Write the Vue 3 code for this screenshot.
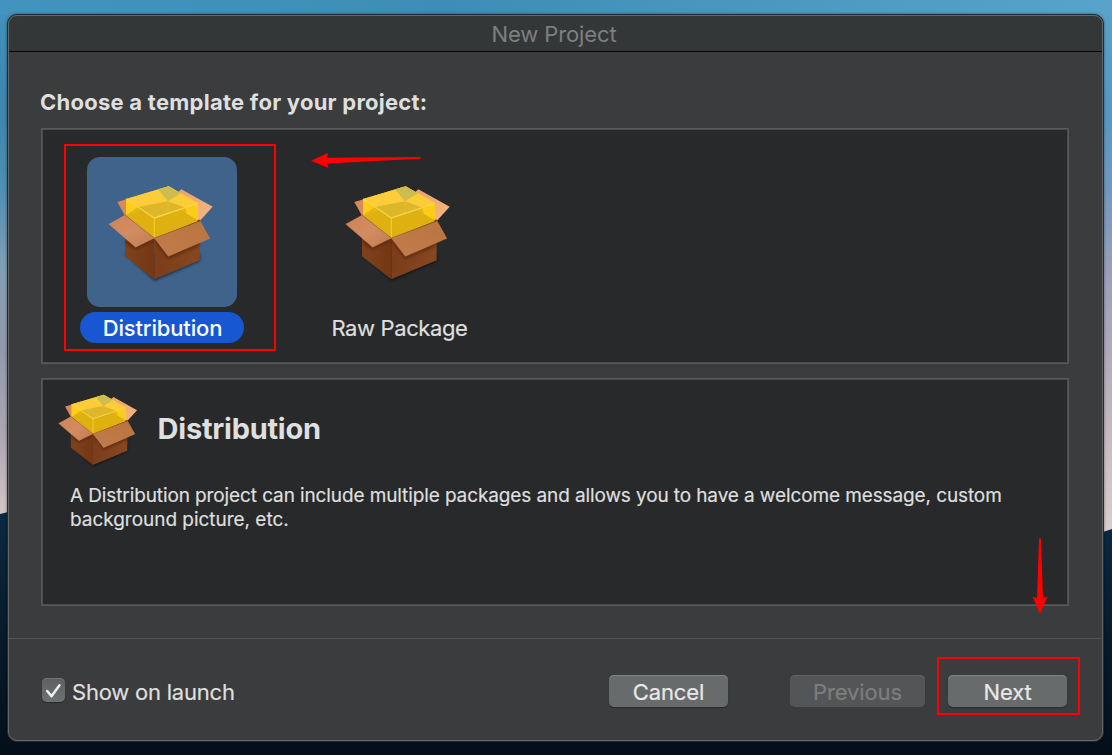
<script setup>
import { ref } from 'vue'

const templates = [
  { id: 'distribution', name: 'Distribution' },
  { id: 'raw', name: 'Raw Package' },
]
const selected = ref('distribution')
const showOnLaunch = ref(true)
</script>

<template>
  <div class="desktop">
    <svg class="hills" viewBox="0 0 1112 755" preserveAspectRatio="none">
      <defs>
        <linearGradient id="hill" x1="0" y1="0" x2="0" y2="1">
          <stop offset="0" stop-color="#0b2a42" />
          <stop offset="0.5" stop-color="#071b2d" />
          <stop offset="1" stop-color="#050f1a" />
        </linearGradient>
      </defs>
      <path d="M0 514 L8 512 L600 560 L1100 533 L1112 529 V755 H0Z" fill="url(#hill)" />
    </svg>

    <!-- shared artwork for the package icon -->
    <svg class="defs" width="0" height="0">
      <defs>
        <linearGradient id="flapL" x1="0" y1="0" x2="1" y2="1">
          <stop offset="0" stop-color="#cd8355" />
          <stop offset="0.5" stop-color="#d38b61" />
          <stop offset="1" stop-color="#c37c50" />
        </linearGradient>
        <linearGradient id="flapR" x1="0" y1="1" x2="1" y2="0">
          <stop offset="0" stop-color="#c27c4c" />
          <stop offset="1" stop-color="#b9743f" />
        </linearGradient>
        <linearGradient id="flapB" x1="0" y1="0" x2="1" y2="1">
          <stop offset="0" stop-color="#e89f6c" />
          <stop offset="1" stop-color="#f8b680" />
        </linearGradient>
        <linearGradient id="sideL" x1="0" y1="0" x2="1" y2="0">
          <stop offset="0" stop-color="#7f421d" />
          <stop offset="1" stop-color="#743713" />
        </linearGradient>
        <linearGradient id="sideR" x1="0" y1="0" x2="1" y2="0">
          <stop offset="0" stop-color="#7b3d1a" />
          <stop offset="1" stop-color="#874821" />
        </linearGradient>
        <filter id="soft" x="-20%" y="-20%" width="140%" height="140%">
          <feGaussianBlur stdDeviation="4" />
        </filter>
        <symbol id="package" viewBox="0 0 360 315">
          <path d="M75 222 L164 302 L299 244 V220 H75Z" fill="#000" opacity="0.55" filter="url(#soft)" />
          <path d="M52 66 L80 58 L110 100 L75 107Z" fill="#d98a58" />
          <path d="M244 28 L338 80 L299 123 L204 64Z" fill="url(#flapB)" />
          <path d="M75 105 L204 62 L299 121 L163 176Z" fill="#a4632f" />
          <path d="M75 120 L163 174 V298 L75 229Z" fill="url(#sideL)" />
          <path d="M163 174 L299 120 V241 L163 298Z" fill="url(#sideR)" />
          <path d="M75 190 L107 210 L163 182 L205 238 L299 198 V180 H75Z" fill="#3c1804" opacity="0.45" filter="url(#soft)" />
          <path d="M78 57 L206 19 L294 70 V122 L163 174 L78 106Z" fill="#ffd014" opacity="0.93" />
          <path d="M78 106 L204 64 L294 122 L163 174Z" fill="#dcb010" />
          <path d="M78 57 L163 114 V172 L78 106Z" fill="#dfb212" opacity="0.75" />
          <path d="M163 114 L294 70 V122 L163 172Z" fill="#dfb212" opacity="0.8" />
          <path d="M78 57 V105 L113 82Z M294 70 V121 L260 101 L257 83Z" fill="#ffd01c" opacity="0.85" />
          <path d="M78 57 L206 19 L294 70 L163 114Z" fill="#fdcd3c" opacity="0.94" />
          <path d="M113 81 L204 64 L257 83 L163 114Z" fill="#d9b429" opacity="0.9" />
          <path d="M174 28 L206 19 L242 40 L204 64Z" fill="#cdbc50" />
          <path d="M204 64 V100" stroke="#f0cc45" stroke-width="3" opacity="0.3" fill="none" />
          <path d="M78 57 L163 114 L294 70" stroke="#fbd84d" stroke-width="4" fill="none" stroke-linejoin="round" opacity="0.85" />
          <path d="M163 114 V172" stroke="#f3cb2c" stroke-width="4" fill="none" opacity="0.9" />
          <path d="M292 121 l7 -2 l2 4 l-5 4z" fill="#74381a" />
          <path d="M75 105 L163 174 L107 202 L26 132Z" fill="url(#flapL)" />
          <path d="M163 174 L301 123 L330 175 L205 229Z" fill="url(#flapR)" />
          <path d="M163 174 L301 123 M75 105 L163 174" stroke="#8a5420" stroke-width="2" fill="none" opacity="0.7" />
          <path d="M26 132 L107 202 L163 174 L205 229 L330 175" stroke="#d99568" stroke-width="1.5" fill="none" opacity="0.6" />
        </symbol>
      </defs>
    </svg>

    <main class="window">
      <header class="titlebar">New Project</header>
      <section class="content">
        <h1 class="prompt">Choose a template for your project:</h1>
        <div class="panel chooser">
          <div
            v-for="t in templates"
            :key="t.id"
            class="template"
            :class="{ selected: selected === t.id }"
            @click="selected = t.id"
          >
            <div class="tile"><svg class="pkg"><use href="#package" /></svg></div>
            <span class="name">{{ t.name }}</span>
          </div>
        </div>
        <div class="panel details">
          <div class="summary">
            <svg class="pkg-small"><use href="#package" /></svg>
            <h2>Distribution</h2>
          </div>
          <p>A Distribution project can include multiple packages and allows you to have a welcome message, custom<br><span class="second">background picture, etc.</span></p>
        </div>
      </section>
      <footer class="footer">
        <label class="launch" @click="showOnLaunch = !showOnLaunch">
          <span class="check">
            <svg v-if="showOnLaunch" viewBox="0 0 23 24"><path d="M5.2 13 L9.5 18.3 L17.5 7.2" /></svg>
          </span>
          <span>Show on launch</span>
        </label>
        <button class="btn cancel">Cancel</button>
        <button class="btn previous" disabled>Previous</button>
        <button class="btn next">Next</button>
      </footer>
    </main>

    <svg class="marks" viewBox="0 0 1112 755">
      <rect x="65" y="145" width="210" height="205" />
      <rect x="938" y="658" width="141" height="56" />
      <path d="M311 160.7 L328 153 L326.8 157.8 L420 157 Q422 158 420 158.8 L327 163.6 L328.6 168Z" />
      <path d="M1040 614 L1032.5 596.5 L1037 598 L1039 539 Q1040 537.5 1041 539 L1043 598 L1047.5 596.5Z" />
    </svg>
  </div>
</template>

<style>
body { margin: 0; overflow: hidden; }
</style>

<style scoped>
.desktop {
  position: relative;
  box-sizing: border-box;
  width: 1112px;
  height: 755px;
  padding: 14px 8px 13px 7px;
  overflow: hidden;
  font-family: Inter, "Liberation Sans", sans-serif;
  color: #dedfdf;
  background:
    linear-gradient(#4093bd 0, #3d85ae 110px, #4f8fb3 190px, #829fb6 270px, #9299ad 350px, #aaa5b0 430px, #d0c4c6 510px) 0 0 / 556px 755px no-repeat,
    linear-gradient(#57a3ca 0, #5499c4 110px, #7099c0 190px, #999fbb 270px, #b0a9b9 350px, #c5b9bf 430px, #d8cdce 530px);
}
.desktop::before {
  content: "";
  position: absolute;
  inset: 0 0 auto 0;
  height: 15px;
  background: linear-gradient(90deg, #4294be, #3d8db7 40%, #4894bd 60%, #57a3ca);
}
.hills { position: absolute; inset: 0; width: 1112px; height: 755px; }
.defs { position: absolute; }
.window {
  position: relative;
  box-sizing: border-box;
  height: 728px;
  border: 1px solid #25292b;
  border-radius: 10px;
  background: #3b3c3d;
  box-shadow: 0 0 3px rgba(0, 0, 0, 0.45);
}
.window::after {
  content: "";
  position: absolute;
  inset: 0;
  border: 1px solid #656768;
  border-radius: 9px;
  pointer-events: none;
}
.titlebar {
  box-sizing: border-box;
  height: 37px;
  border-bottom: 1px solid #050505;
  border-radius: 9px 9px 0 0;
  background: #343738;
  font-size: 22px;
  line-height: 38px;
  letter-spacing: -0.1px;
  text-align: center;
  text-indent: -3px;
  color: #7d7f80;
}
.content { height: 586px; padding: 37px 34px 0 33px; box-sizing: border-box; }
.prompt {
  margin: 0 0 13px -1px;
  font-size: 22px;
  line-height: 26px;
  font-weight: 700;
  letter-spacing: 0.25px;
}
.panel {
  box-sizing: border-box;
  width: 1028px;
  border: 1px solid #58595a;
  background: #28292a;
  box-shadow: inset 0 0 0 1px #4b4d4e;
}
.chooser { display: flex; gap: 37px; height: 236px; padding: 28px 0 0 20px; }
.template { display: flex; flex-direction: column; align-items: center; width: 200px; }
.tile { box-sizing: border-box; width: 150px; height: 150px; padding: 23px 0 0 13px; border-radius: 13px; }
.pkg { display: block; width: 120px; height: 105px; }
.name {
  margin-top: 5px;
  height: 31px;
  line-height: 32px;
  padding-left: 1px;
  border-radius: 16px;
  font-size: 22px;
  letter-spacing: -0.38px;
  -webkit-text-stroke: 0.2px;
}
.selected .tile { background: #3f638b; }
.selected .name {
  box-sizing: border-box;
  width: 164px;
  text-align: center;
  font-weight: 500;
  letter-spacing: -0.16px;
  color: #fff;
  background: #1857d2;
  -webkit-text-stroke: 0;
}
.details { height: 228px; margin-top: 14px; }
.summary { display: flex; align-items: flex-start; box-sizing: border-box; padding: 11px 0 0 10px; height: 105px; }
.pkg-small { width: 90.6px; height: 79.3px; }
.summary h2 {
  margin: 20px 0 0 15px;
  font-size: 29px;
  line-height: 37px;
  font-weight: 700;
  letter-spacing: -0.25px;
}
.details p { margin: 0 0 0 28px; font-size: 19px; line-height: 24px; letter-spacing: -0.11px; white-space: nowrap; -webkit-text-stroke: 0.2px; }
.details .second { letter-spacing: -0.03px; }
.footer {
  display: flex;
  align-items: flex-start;
  box-sizing: border-box;
  height: 103px;
  padding: 36px 36px 0 34px;
  border-top: 1px solid #515354;
}
.launch { display: flex; flex: 1; gap: 7px; font-size: 22px; line-height: 34px; letter-spacing: -0.22px; -webkit-text-stroke: 0.2px; }
.check {
  width: 23px;
  height: 24px;
  margin-top: 3px;
  border-radius: 5px;
  background: linear-gradient(#5d6061, #6e7172);
  box-shadow: 0 1px 1px rgba(0, 0, 0, 0.3), inset 0 1px 0 #717475;
}
.check svg { display: block; width: 23px; height: 24px; fill: none; stroke: #f0f0f0; stroke-width: 2.5; stroke-linecap: round; stroke-linejoin: round; }
.btn {
  height: 32px;
  width: 119px;
  padding: 0;
  border: 0;
  border-radius: 5px;
  font: 400 22px/34px Inter, "Liberation Sans", sans-serif;
  letter-spacing: -0.1px;
  color: #e8e8e8;
  background: #686b6c;
  box-shadow: inset 0 1px 0 #808383, 0 1px 1px rgba(0, 0, 0, 0.3);
  -webkit-text-stroke: 0.2px;
}
.previous { width: 135px; margin: 0 23px 0 62px; color: #7c7e7f; background: #535556; box-shadow: inset 0 1px 0 #606263; }
.marks { position: absolute; inset: 0; width: 1112px; height: 755px; fill: #f00; pointer-events: none; }
.marks rect { fill: none; stroke: #f00; stroke-width: 2; }
</style>
